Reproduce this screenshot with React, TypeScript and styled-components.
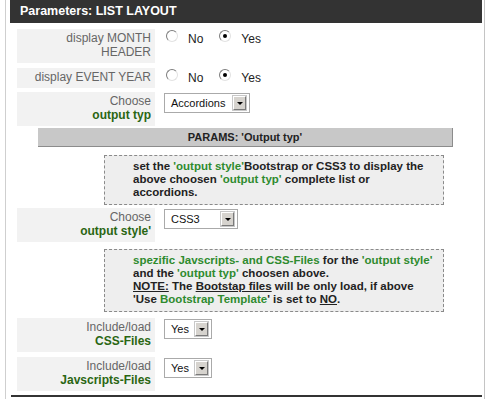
import React from 'react';
import styled, { createGlobalStyle } from 'styled-components';

const GlobalStyle = createGlobalStyle`
  html, body {
    margin: 0;
    padding: 0;
    background: #fff;
  }
  body {
    font-family: "Liberation Sans", Arial, sans-serif;
  }
`;

const Frame = styled.div`
  box-sizing: border-box;
  width: 480px;
  min-height: 399px;
  margin-left: 5px;
  padding: 0 2px 0 4px;
  border-left: 1px solid #cfcfcf;
  border-right: 1px solid #c4c4c4;
  display: flex;
  flex-direction: column;
`;

const Header = styled.div`
  height: 23px;
  line-height: 23px;
  padding-left: 10px;
  background: #333;
  color: #fff;
  font-weight: bold;
  font-size: 12.5px;
`;

const Row = styled.div<{ $top: number }>`
  display: grid;
  grid-template-columns: 138px 1fr;
  column-gap: 9px;
  margin: ${(p) => p.$top}px 0 0 7px;
`;

const Label = styled.div`
  background: #f2f2f2;
  padding: 2px 4px 4px;
  text-align: right;
  color: #666;
  font-size: 12px;
  line-height: 14px;
`;

const LabelKey = styled.span`
  display: block;
  color: #2a6612;
  font-weight: bold;
`;

const Control = styled.div`
  display: flex;
  align-items: flex-start;
  padding-top: 1px;
`;

const RadioOption = styled.label`
  display: inline-flex;
  align-items: flex-start;
  gap: 10px;
  margin: 0 14px 0 2px;
  font-size: 12px;
  line-height: 14px;
  color: #222;
  span:last-child {
    padding-top: 2px;
  }
`;

const Radio = styled.span<{ $checked?: boolean }>`
  position: relative;
  box-sizing: border-box;
  width: 12px;
  height: 12px;
  border-radius: 50%;
  border: 1px solid;
  border-color: #7d7d7d #e2e2e2 #e2e2e2 #7d7d7d;
  background: #fff;
  &::after {
    content: '';
    display: ${(p) => (p.$checked ? 'block' : 'none')};
    position: absolute;
    left: 3px;
    top: 3px;
    width: 4px;
    height: 4px;
    border-radius: 50%;
    background: #000;
  }
`;

const Select = styled.div<{ $width: number }>`
  box-sizing: border-box;
  display: flex;
  align-items: center;
  justify-content: space-between;
  width: ${(p) => p.$width}px;
  height: 20px;
  padding: 0 3px 0 6px;
  border: 1px solid #aaa;
  background: #fff;
  font-size: 11px;
  color: #111;
`;

const DropButton = styled.span`
  box-sizing: border-box;
  display: flex;
  align-items: center;
  justify-content: center;
  width: 13px;
  height: 14px;
  background: #d6d3ce;
  border: 1px solid;
  border-color: #fff #7a7a7a #7a7a7a #fff;
  box-shadow: 0 0 0 1px #c8c8c8;
  &::after {
    content: '';
    border-top: 3px solid #000;
    border-left: 3px solid transparent;
    border-right: 3px solid transparent;
  }
`;

const Bar = styled.div`
  box-sizing: border-box;
  width: 415px;
  height: 19px;
  margin: 2px 0 0 28px;
  background: #c8c8c8;
  border-right: 1px solid #8c8c8c;
  border-bottom: 1px solid #8c8c8c;
  text-align: center;
  line-height: 18px;
  font-size: 11px;
  font-weight: bold;
  color: #222;
`;

const NoteBox = styled.div<{ $top: number }>`
  box-sizing: border-box;
  width: 340px;
  margin: ${(p) => p.$top}px 0 0 94px;
  padding: 4px 6px 5px 28px;
  border: 1px dashed #8a8a8a;
  background: #eee;
  font-size: 11.5px;
  font-weight: bold;
  line-height: 13px;
  color: #222;
  white-space: nowrap;
`;

const G = styled.span`
  color: #2e8b2e;
`;

const U = styled.span`
  text-decoration: underline;
`;

const BottomRule = styled.div`
  height: 2px;
  margin: 4px 0 0 1px;
  background: #333;
`;

const YesNo = ({ yes }: { yes: boolean }) => (
  <Control>
    <RadioOption>
      <Radio $checked={!yes} />
      <span>No</span>
    </RadioOption>
    <RadioOption>
      <Radio $checked={yes} />
      <span>Yes</span>
    </RadioOption>
  </Control>
);

const Dropdown = ({ value, width }: { value: string; width: number }) => (
  <Control>
    <Select $width={width}>
      <span>{value}</span>
      <DropButton />
    </Select>
  </Control>
);

export default function App() {
  return (
    <>
      <GlobalStyle />
      <Frame>
        <Header>Parameters: LIST LAYOUT</Header>

        <Row $top={6}>
          <Label>
            display MONTH
            <br />
            HEADER
          </Label>
          <YesNo yes />
        </Row>

        <Row $top={5}>
          <Label>display EVENT YEAR</Label>
          <YesNo yes />
        </Row>

        <Row $top={4}>
          <Label>
            Choose
            <LabelKey>output typ</LabelKey>
          </Label>
          <Dropdown value="Accordions" width={86} />
        </Row>

        <Bar>PARAMS: 'Output typ'</Bar>

        <NoteBox $top={8}>
          set the <G>'output style'</G>Bootstrap or CSS3 to display the
          <br />
          above choosen <G>'output typ'</G> complete list or
          <br />
          accordions.
        </NoteBox>

        <Row $top={3}>
          <Label>
            Choose
            <LabelKey>output style'</LabelKey>
          </Label>
          <Dropdown value="CSS3" width={74} />
        </Row>

        <NoteBox $top={7}>
          <G>spezific Javscripts- and CSS-Files</G> for the <G>'output style'</G>
          <br />
          and the <G>'output typ'</G> choosen above.
          <br />
          <U>NOTE:</U> The <U>Bootstap files</U> will be only load, if above
          <br />
          'Use <G>Bootstrap Template</G>' is set to <U>NO</U>.
        </NoteBox>

        <Row $top={6}>
          <Label>
            Include/load
            <LabelKey>CSS-Files</LabelKey>
          </Label>
          <Dropdown value="Yes" width={48} />
        </Row>

        <Row $top={5}>
          <Label>
            Include/load
            <LabelKey>Javscripts-Files</LabelKey>
          </Label>
          <Dropdown value="Yes" width={48} />
        </Row>

        <BottomRule />
      </Frame>
    </>
  );
}
